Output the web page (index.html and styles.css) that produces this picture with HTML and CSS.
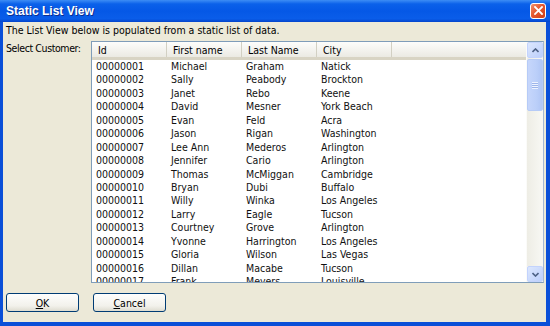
FILE: index.html
```html
<!DOCTYPE html>
<html lang="en">

<head>
    <meta charset="UTF-8">
    <meta name="viewport" content="width=device-width, initial-scale=1.0">
    <title>Static List View</title>
    <link rel="stylesheet" href="styles.css">
</head>

<body>
    <div class="window">
        <div class="titlebar">
            <span class="title">Static List View</span>
            <button class="close-btn" aria-label="Close">
                <svg width="9" height="9" viewBox="0 0 9 9">
                    <path d="M1 1L8 8M8 1L1 8" stroke="#fff" stroke-width="1.8" stroke-linecap="square" />
                </svg>
            </button>
        </div>
        <div class="client">
            <p class="intro">The List View below is populated from a static list of data.</p>
            <div class="main">
                <span class="field-label">Select Customer:</span>
                <div class="listview">
                    <div class="lv-content">
                        <div class="lv-header">
                            <div class="col">Id</div>
                            <div class="col">First name</div>
                            <div class="col">Last Name</div>
                            <div class="col">City</div>
                            <div class="col filler"></div>
                        </div>
                        <div class="lv-rows">
                            <div class="row"><span>00000001</span><span>Michael</span><span>Graham</span><span>Natick</span></div>
                            <div class="row"><span>00000002</span><span>Sally</span><span>Peabody</span><span>Brockton</span></div>
                            <div class="row"><span>00000003</span><span>Janet</span><span>Rebo</span><span>Keene</span></div>
                            <div class="row"><span>00000004</span><span>David</span><span>Mesner</span><span>York Beach</span></div>
                            <div class="row"><span>00000005</span><span>Evan</span><span>Feld</span><span>Acra</span></div>
                            <div class="row"><span>00000006</span><span>Jason</span><span>Rigan</span><span>Washington</span></div>
                            <div class="row"><span>00000007</span><span>Lee Ann</span><span>Mederos</span><span>Arlington</span></div>
                            <div class="row"><span>00000008</span><span>Jennifer</span><span>Cario</span><span>Arlington</span></div>
                            <div class="row"><span>00000009</span><span>Thomas</span><span>McMiggan</span><span>Cambridge</span></div>
                            <div class="row"><span>00000010</span><span>Bryan</span><span>Dubi</span><span>Buffalo</span></div>
                            <div class="row"><span>00000011</span><span>Willy</span><span>Winka</span><span>Los Angeles</span></div>
                            <div class="row"><span>00000012</span><span>Larry</span><span>Eagle</span><span>Tucson</span></div>
                            <div class="row"><span>00000013</span><span>Courtney</span><span>Grove</span><span>Arlington</span></div>
                            <div class="row"><span>00000014</span><span>Yvonne</span><span>Harrington</span><span>Los Angeles</span></div>
                            <div class="row"><span>00000015</span><span>Gloria</span><span>Wilson</span><span>Las Vegas</span></div>
                            <div class="row"><span>00000016</span><span>Dillan</span><span>Macabe</span><span>Tucson</span></div>
                            <div class="row"><span>00000017</span><span>Frank</span><span>Meyers</span><span>Louisville</span></div>
                        </div>
                    </div>
                    <div class="scrollbar">
                        <div class="sb-btn">
                            <svg width="7" height="5" viewBox="0 0 7 5">
                                <path d="M0.5 4L3.5 1L6.5 4" fill="none" stroke="#4d6185" stroke-width="1.6" />
                            </svg>
                        </div>
                        <div class="sb-track">
                            <div class="sb-thumb">
                                <span class="grip"></span>
                            </div>
                        </div>
                        <div class="sb-btn">
                            <svg width="7" height="5" viewBox="0 0 7 5">
                                <path d="M0.5 1L3.5 4L6.5 1" fill="none" stroke="#4d6185" stroke-width="1.6" />
                            </svg>
                        </div>
                    </div>
                </div>
            </div>
            <div class="buttons">
                <button class="btn"><u>O</u>K</button>
                <button class="btn"><u>C</u>ancel</button>
            </div>
        </div>
    </div>
</body>

</html>
```

FILE: styles.css
```css
body {
    margin: 0;
    font-family: "DejaVu Sans Condensed", "DejaVu Sans", sans-serif;
    font-size: 10.5px;
    color: #000;
}

.window {
    width: 550px;
    height: 326px;
    box-sizing: border-box;
    display: flex;
    flex-direction: column;
    background: #0a4fd8;
    padding: 0 4px 4px 3px;
}

.titlebar {
    height: 22px;
    margin: 0 -4px 0 -3px;
    padding: 0 4px 0 6px;
    display: flex;
    align-items: center;
    justify-content: space-between;
    background: linear-gradient(#3d8df5 0%, #0b61ea 18%, #0558e6 50%, #0a5de9 85%, #0344cc 100%);
}

.title {
    font-family: "Liberation Sans", sans-serif;
    font-weight: bold;
    font-size: 12px;
    color: #fff;
    text-shadow: 1px 1px 0 #0b2e8f;
}

.close-btn {
    width: 16px;
    height: 16px;
    padding: 0;
    margin-top: -1px;
    border: 1px solid #fff;
    border-radius: 3px;
    background: linear-gradient(135deg, #f3936c, #e5582f 45%, #cf4019);
    display: flex;
    align-items: center;
    justify-content: center;
}

.client {
    flex: 1;
    background: #ece9d8;
    padding: 2px 2px 0 3px;
    display: flex;
    flex-direction: column;
}

.intro {
    margin: 0;
    line-height: 13px;
}

.main {
    display: flex;
    margin-top: 4px;
}

.field-label {
    width: 85px;
    flex-shrink: 0;
    padding-top: 1px;
    line-height: 13px;
    letter-spacing: -0.4px;
}

.listview {
    width: 453px;
    height: 242px;
    box-sizing: border-box;
    border: 1px solid #7f9db9;
    border-right-color: #a5b9d4;
    background: #fff;
    display: flex;
    overflow: hidden;
}

.lv-content {
    flex: 1;
    overflow: hidden;
}

.lv-header {
    display: flex;
    height: 18px;
    box-sizing: border-box;
    background: linear-gradient(#fdfdfb, #ebeae3);
    border-bottom: 3px solid #d8d4c4;
}

.col {
    width: 75px;
    box-sizing: border-box;
    padding-left: 6px;
    line-height: 16px;
    border-right: 1px solid #d2d0c3;
}

.col.filler {
    flex: 1;
    border-right: none;
}

.row {
    display: flex;
    height: 13.45px;
    line-height: 13.45px;
    color: #111;
}

.row span {
    width: 75px;
    padding-left: 4px;
    box-sizing: border-box;
    white-space: nowrap;
}

.scrollbar {
    width: 16px;
    flex-shrink: 0;
    display: flex;
    flex-direction: column;
    background: #f4f3ee;
    border-left: 1px solid #fbfbf9;
}

.sb-btn {
    height: 16px;
    box-sizing: border-box;
    border: 1px solid #c3d3fd;
    border-radius: 2px;
    background: linear-gradient(135deg, #dce7fe, #bccffb);
    display: flex;
    align-items: center;
    justify-content: center;
}

.sb-track {
    flex: 1;
    background: linear-gradient(90deg, #eeede5, #f8f8f4);
}

.sb-thumb {
    height: 52px;
    box-sizing: border-box;
    margin-top: 1px;
    border: 1px solid #b6cbf7;
    border-radius: 2px;
    background: linear-gradient(90deg, #c6d6fb, #bbcff9 60%, #b0c6f5);
    display: flex;
    align-items: center;
    justify-content: center;
}

.grip {
    width: 6px;
    height: 7px;
    background: repeating-linear-gradient(#eef3ff 0 1px, #9db5ea 1px 2px);
}

.buttons {
    display: flex;
    gap: 14px;
    margin-top: 10px;
}

.btn {
    width: 73px;
    height: 19px;
    padding: 0;
    font-family: inherit;
    font-size: 10.5px;
    color: #000;
    border: 1px solid #003c74;
    border-radius: 3px;
    background: linear-gradient(#fefefd, #f2f1eb 70%, #dedcd0);
}
```
